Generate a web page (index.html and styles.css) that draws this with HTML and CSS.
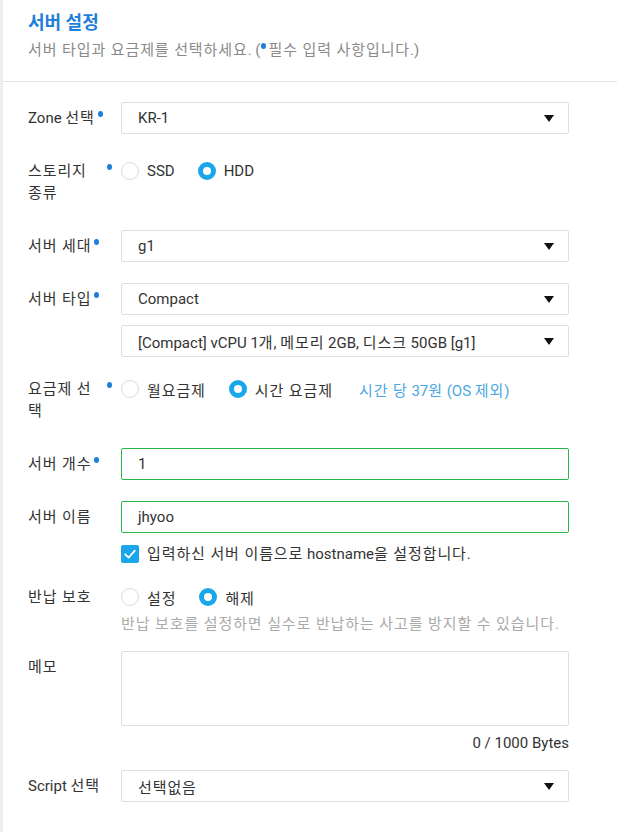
FILE: index.html
```html
<!DOCTYPE html>
<html lang="ko">
<head>
<meta charset="utf-8">
<title>서버 설정</title>
<link rel="stylesheet" href="styles.css">
</head>
<body>
<div class="panel">
  <div class="header">
    <h1 class="title">서버 설정</h1>
    <p class="subtitle"><span class="k">서버 타입과 요금제를 선택하세요</span>. (<span class="dot-inline"></span><span class="k">필수 입력 사항입니다</span>.)</p>
  </div>
  <div class="form">
    <div class="row">
      <div class="label"><span class="label-text req">Zone <span class="k">선택</span></span></div>
      <div class="control">
        <div class="select"><span class="value">KR-1</span><span class="arrow"></span></div>
      </div>
    </div>

    <div class="row">
      <div class="label"><span class="label-text req k">스토리지 종류</span></div>
      <div class="control">
        <div class="radios">
          <span class="radio"><span class="circle"></span>SSD</span>
          <span class="radio"><span class="circle on"></span>HDD</span>
        </div>
      </div>
    </div>

    <div class="row">
      <div class="label"><span class="label-text req k">서버 세대</span></div>
      <div class="control">
        <div class="select"><span class="value">g1</span><span class="arrow"></span></div>
      </div>
    </div>

    <div class="row">
      <div class="label"><span class="label-text req k">서버 타입</span></div>
      <div class="control stack">
        <div class="select"><span class="value">Compact</span><span class="arrow"></span></div>
        <div class="select"><span class="value">[Compact] vCPU 1<span class="k">개</span>, <span class="k">메모리</span> 2GB, <span class="k">디스크</span> 50GB [g1]</span><span class="arrow"></span></div>
      </div>
    </div>

    <div class="row">
      <div class="label"><span class="label-text req k">요금제 선택</span></div>
      <div class="control">
        <div class="radios">
          <span class="radio k"><span class="circle"></span>월요금제</span>
          <span class="radio k"><span class="circle on"></span>시간 요금제</span>
          <span class="note"><span class="k">시간 당</span> 37<span class="k">원</span> (OS <span class="k">제외</span>)</span>
        </div>
      </div>
    </div>

    <div class="row">
      <div class="label"><span class="label-text req k">서버 개수</span></div>
      <div class="control">
        <div class="input valid">1</div>
      </div>
    </div>

    <div class="row">
      <div class="label"><span class="label-text k">서버 이름</span></div>
      <div class="control">
        <div class="input valid">jhyoo</div>
        <div class="check-line">
          <span class="checkbox"><svg width="18" height="18" viewBox="0 0 18 18"><path d="M4.2 9.3 L7.6 12.6 L13.8 5.6" fill="none" stroke="#fff" stroke-width="1.8" stroke-linecap="round" stroke-linejoin="round"/></svg></span>
          <span><span class="k">입력하신 서버 이름으로</span> hostname<span class="k">을 설정합니다</span>.</span>
        </div>
      </div>
    </div>

    <div class="row">
      <div class="label"><span class="label-text k">반납 보호</span></div>
      <div class="control">
        <div class="radios">
          <span class="radio k"><span class="circle"></span>설정</span>
          <span class="radio k"><span class="circle on"></span>해제</span>
        </div>
        <div class="hint"><span class="k">반납 보호를 설정하면 실수로 반납하는 사고를 방지할 수 있습니다</span>.</div>
      </div>
    </div>

    <div class="row">
      <div class="label"><span class="label-text k">메모</span></div>
      <div class="control">
        <div class="textarea"></div>
        <div class="counter">0 / 1000 Bytes</div>
      </div>
    </div>

    <div class="row">
      <div class="label"><span class="label-text">Script <span class="k">선택</span></span></div>
      <div class="control">
        <div class="select"><span class="value k">선택없음</span><span class="arrow"></span></div>
      </div>
    </div>
  </div>
</div>
</body>
</html>
```
FILE: styles.css
```css
* { box-sizing: border-box; }
html, body { margin: 0; padding: 0; background: #fff; }
body {
  font-family: Roboto, "Noto Sans CJK KR", "Noto Sans", sans-serif;
  font-size: 15px;
  color: #333;
}
.k { letter-spacing: 0.9px; }
.panel {
  border-left: 3px solid #eeeeee;
  min-height: 832px;
}
.header {
  padding: 11px 25px 20px;
  border-bottom: 1px solid #e4e4e4;
}
.title {
  margin: 0;
  font-size: 18px;
  line-height: 24px;
  font-weight: 700;
  color: #1e7fd8;
}
.subtitle {
  margin: 4px 0 0;
  line-height: 22px;
  color: #8a8a8a;
}
.dot-inline {
  display: inline-block;
  width: 5px;
  height: 6px;
  border-radius: 50%;
  background: #1e7fd8;
  vertical-align: 6px;
  margin: 0 2px 0 1px;
}
.form {
  padding: 20px 48px 0 25px;
}
.row {
  display: grid;
  grid-template-columns: 93px 1fr;
  margin-bottom: 16px;
}
.label {
  padding: 5px 0 10px;
  line-height: 22px;
}
.label-text {
  display: inline-block;
  max-width: 76px;
  position: relative;
}
.label-text.req::after {
  content: "";
  position: absolute;
  left: calc(100% + 3px);
  top: 4px;
  width: 5px;
  height: 6px;
  border-radius: 50%;
  background: #1e7fd8;
}
.control { min-width: 0; }
.stack { display: flex; flex-direction: column; gap: 10px; }
.select, .input {
  height: 32px;
  border: 1px solid #dedede;
  border-radius: 2px;
  display: flex;
  align-items: center;
  padding: 0 14px 0 16px;
  background: #fff;
}
.select .value { flex: 1; white-space: nowrap; }
.arrow {
  width: 0; height: 0;
  border-left: 5px solid transparent;
  border-right: 5px solid transparent;
  border-top: 7px solid #111;
}
.input.valid { border-color: #27b84a; }
.radios {
  display: flex;
  align-items: center;
  height: 32px;
}
.radio {
  display: inline-flex;
  align-items: center;
  margin-right: 23px;
}
.circle {
  width: 18px; height: 18px;
  border-radius: 50%;
  border: 1px solid #dcdcdc;
  background: #fff;
  margin-right: 8px;
  flex: none;
}
.circle.on {
  border: 5.5px solid #1aa6ea;
}
.note {
  color: #4aa7e3;
  margin-left: 3px;
}
.check-line {
  margin-top: 10px;
  line-height: 22px;
  display: flex;
  align-items: center;
}
.checkbox {
  width: 18px; height: 18px;
  border-radius: 2px;
  background: #1aa6ea;
  margin-right: 8px;
  display: inline-flex;
  flex: none;
}
.hint {
  line-height: 22px;
  color: #aaaaaa;
}
.textarea {
  height: 75px;
  border: 1px solid #dedede;
  border-radius: 2px;
}
.counter {
  text-align: right;
  margin-top: 6px;
  line-height: 22px;
}
```
